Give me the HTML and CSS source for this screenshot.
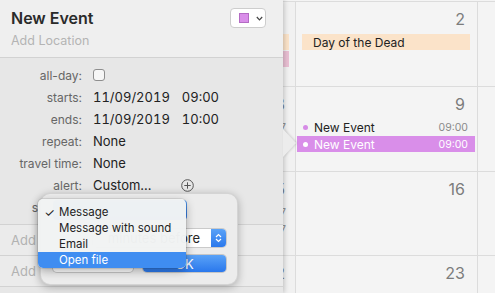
FILE: index.html
```html
<!DOCTYPE html>
<html lang="en">
<head>
  <meta charset="UTF-8" />
  <meta name="viewport" content="width=device-width, initial-scale=1.0"/>
  <title>New Event</title>
  <link rel="stylesheet" href="styles.css">
</head>
<body>

  <div class="screen">

    <!-- event popover -->
    <div class="popover">
      <header class="pop-head">
        <div class="title-row">
          <h1 class="title">New Event</h1>
          <button class="color-btn">
            <span class="swatch"></span>
            <svg width="7" height="5" viewBox="0 0 7 5"><polyline points="0.8,1 3.5,3.8 6.2,1" fill="none" stroke="#444" stroke-width="1.2"/></svg>
          </button>
        </div>
        <div class="location">Add Location</div>
      </header>

      <div class="pop-body">
        <div class="label">all-day:</div>
        <div class="value"><span class="checkbox"></span></div>

        <div class="label">starts:</div>
        <div class="value"><span>11/09/2019</span><span class="time">09:00</span></div>

        <div class="label">ends:</div>
        <div class="value"><span>11/09/2019</span><span class="time">10:00</span></div>

        <div class="label">repeat:</div>
        <div class="value">None</div>

        <div class="label">travel time:</div>
        <div class="value">None</div>

        <div class="label">alert:</div>
        <div class="value">
          <span class="custom">Custom…</span>
          <svg class="plus" width="13" height="13" viewBox="0 0 13 13">
            <circle cx="6.5" cy="6.5" r="5.8" fill="none" stroke="#555" stroke-width="1"/>
            <path d="M6.5 3.3v6.4M3.3 6.5h6.4" stroke="#555" stroke-width="1"/>
          </svg>
        </div>

        <div class="label">show as:</div>
        <div class="value">Busy</div>
      </div>

      <div class="pop-add">Add Invitees</div>
      <div class="pop-add">Add Notes, URL, or Attachments</div>

      <div class="arrow"></div>
    </div>

    <!-- month grid behind -->
    <div class="calendar">
      <div class="cell cut">
        <div class="day"></div>
        <div class="ev tan"></div>
        <div class="ev pink"></div>
      </div>
      <div class="cell">
        <div class="day">2</div>
        <div class="ev tan">Day of the Dead</div>
      </div>
      <div class="cell"></div>

      <div class="cell cut">
        <div class="day">8</div>
        <div class="ev"><span class="when">09:07</span></div>
      </div>
      <div class="cell">
        <div class="day">9</div>
        <div class="ev"><span class="dot"></span>New Event<span class="when">09:00</span></div>
        <div class="ev picked"><span class="dot"></span>New Event<span class="when">09:00</span></div>
      </div>
      <div class="cell"></div>

      <div class="cell cut">
        <div class="day">15</div>
        <div class="ev"><span class="when">10:07</span></div>
        <div class="ev"><span class="when">11:07</span></div>
      </div>
      <div class="cell">
        <div class="day">16</div>
      </div>
      <div class="cell"></div>

      <div class="cell cut">
        <div class="day">22</div>
      </div>
      <div class="cell">
        <div class="day">23</div>
      </div>
      <div class="cell"></div>
    </div>

    <!-- custom alert sheet -->
    <div class="sheet">
      <div class="sheet-popup"></div>
      <div class="sheet-select">
        <span class="select-text">minutes before</span>
        <span class="stepper">
          <svg width="7" height="10" viewBox="0 0 7 10"><polyline points="1,4 3.5,1.5 6,4" fill="none" stroke="#fff" stroke-width="1.2"/><polyline points="1,6 3.5,8.5 6,6" fill="none" stroke="#fff" stroke-width="1.2"/></svg>
        </span>
      </div>
      <div class="sheet-buttons">
        <button class="btn"></button>
        <button class="btn primary">OK</button>
      </div>
    </div>

    <div class="menu">
      <div class="menu-item"><span class="check">✓</span>Message</div>
      <div class="menu-item"><span class="check"></span>Message with sound</div>
      <div class="menu-item"><span class="check"></span>Email</div>
      <div class="menu-item active"><span class="check"></span>Open file</div>
    </div>

  </div>

</body>
</html>
```

FILE: styles.css
```css
* {
  box-sizing: border-box;
}

body {
  margin: 0;
  font-family: Inter, "Liberation Sans", Arial, sans-serif;
  font-size: 13px;
  color: #262626;
  background: #f4f4f4;
  overflow: hidden;
}

.screen {
  position: relative;
  display: flex;
  width: 495px;
  height: 293px;
  overflow: hidden;
}

/* popover */

.popover {
  position: relative;
  z-index: 2;
  width: 283px;
  flex-shrink: 0;
  display: flex;
  flex-direction: column;
  background: #e7e7e7;
  box-shadow: 1px 0 5px rgba(0, 0, 0, 0.22);
}

.pop-head {
  height: 58px;
  padding: 8px 17px 0 11px;
  background: #efefef;
  border-bottom: 1px solid #d2d2d2;
}

.title-row {
  display: flex;
  justify-content: space-between;
  align-items: center;
}

.title {
  margin: 0;
  font-size: 16px;
  line-height: 20px;
  font-weight: 600;
  color: #2a2a2a;
}

.color-btn {
  display: flex;
  align-items: center;
  gap: 7px;
  width: 36px;
  height: 20px;
  padding: 0 0 0 8px;
  background: #fff;
  border: 1px solid #cdcdcd;
  border-radius: 4px;
}

.swatch {
  width: 10px;
  height: 10px;
  background: #d98ee9;
  border: 1px solid #b46cc4;
}

.location {
  margin-top: 5px;
  line-height: 16px;
  font-size: 12.5px;
  color: #b4b4b4;
}

.pop-body {
  display: grid;
  grid-template-columns: 71px auto;
  grid-auto-rows: 22px;
  column-gap: 11px;
  align-items: center;
  padding: 6px 0 6px 11px;
  border-bottom: 1px solid #d2d2d2;
}

.label {
  text-align: right;
  font-size: 12px;
  color: #666;
  white-space: nowrap;
}

.value {
  display: flex;
  align-items: center;
  color: #222;
  font-variant-numeric: tabular-nums;
}

.time {
  margin-left: 12px;
}

.checkbox {
  width: 12px;
  height: 12px;
  background: #f6f6f6;
  border: 1px solid #8e8e8e;
  border-radius: 3px;
}

.custom {
  width: 88px;
}

.pop-add {
  height: 31px;
  line-height: 30px;
  padding-left: 11px;
  color: #b2b2b2;
  background: #ebebeb;
  border-bottom: 1px solid #d2d2d2;
  white-space: nowrap;
}

.pop-add:last-of-type {
  flex: 1;
  border-bottom: none;
  padding-top: 3px;
}

.arrow {
  position: absolute;
  right: -13px;
  top: 129px;
  width: 0;
  height: 0;
  border-top: 14px solid transparent;
  border-bottom: 14px solid transparent;
  border-left: 13px solid #ececec;
  filter: drop-shadow(1px 0 1px rgba(0, 0, 0, 0.15));
}

/* calendar grid */

.calendar {
  flex: 1;
  display: grid;
  grid-template-columns: 12px 181px 1fr;
  grid-template-rows: 84px 84px 83px 1fr;
  gap: 1px;
  margin-top: 1px;
  border-top: 1px solid #dcdcdc;
  background: #dcdcdc;
}

.cell {
  background: #f4f4f4;
  overflow: hidden;
}

.cut {
  background: #f1f1f1;
}

.day {
  display: flex;
  justify-content: flex-end;
  padding: 8px 12px 0 0;
  height: 26px;
  line-height: 18px;
  font-size: 16px;
  color: #7c7c7c;
  white-space: nowrap;
}

.cut .day {
  padding-right: 10px;
}

.ev {
  display: flex;
  align-items: center;
  height: 16px;
  margin: 6px 2px 1px 1px;
  padding: 0 7px 0 6px;
  font-size: 12px;
  white-space: nowrap;
  color: #222;
}

.ev + .ev {
  margin-top: 0;
}

.ev.tan {
  margin-left: 6px;
  margin-right: 7px;
  padding-left: 11px;
  background: #fbe3c9;
}

.ev.pink {
  margin-left: 6px;
  margin-right: 7px;
  background: #e9bfd3;
}

.cut .ev {
  margin-left: 0;
  margin-right: 9px;
  justify-content: flex-end;
  padding: 0;
}

.cut .ev.tan,
.cut .ev.pink {
  margin-right: 6px;
}

.dot {
  width: 5px;
  height: 5px;
  margin-right: 6px;
  border-radius: 50%;
  background: #d68be6;
}

.when {
  margin-left: auto;
  font-size: 10.5px;
  color: #8a8a8a;
}

.ev.picked {
  background: #d98ee9;
  color: #fff;
}

.ev.picked .dot {
  background: #fff;
}

.ev.picked .when {
  color: #fff;
}

/* custom alert sheet */

.sheet {
  position: absolute;
  z-index: 3;
  left: 40px;
  top: 193px;
  width: 198px;
  height: 92px;
  padding: 6px 11px 0 12px;
  background: #ececec;
  border: 1px solid rgba(0, 0, 0, 0.1);
  border-radius: 10px;
  box-shadow: 0 2px 9px rgba(0, 0, 0, 0.28);
}

.sheet-popup {
  width: 134px;
  height: 20px;
  border-radius: 4px;
  background: linear-gradient(#5aa2f7, #2a78ec);
}

.sheet-select {
  display: flex;
  height: 18px;
  margin: 9px 0 0 40px;
  background: #fff;
  border-radius: 4px;
  box-shadow: 0 0 0 1px rgba(0, 0, 0, 0.14);
}

.select-text {
  flex: 1;
  line-height: 18px;
  text-align: right;
  padding-right: 11px;
}

.stepper {
  display: flex;
  align-items: center;
  justify-content: center;
  width: 15px;
  border-radius: 0 4px 4px 0;
  background: linear-gradient(#5aa2f7, #2a78ec);
}

.sheet-buttons {
  display: flex;
  gap: 10px;
  margin-top: 8px;
}

.btn {
  width: 81px;
  height: 17px;
  padding: 0;
  font-family: inherit;
  font-size: 13px;
  background: #fff;
  border: none;
  border-radius: 4px;
  box-shadow: 0 0 0 1px rgba(0, 0, 0, 0.16);
}

.btn.primary {
  width: 84px;
  color: #fff;
  background: linear-gradient(#5aa2f7, #2a78ec);
}

/* popup menu */

.menu {
  position: absolute;
  z-index: 4;
  left: 38px;
  top: 199px;
  width: 148px;
  height: 69px;
  padding-top: 5px;
  overflow: hidden;
  background: rgba(241, 243, 243, 0.98);
  border-radius: 5px;
  box-shadow: 0 3px 10px rgba(0, 0, 0, 0.3), 0 0 0 1px rgba(0, 0, 0, 0.08);
}

.menu-item {
  display: flex;
  align-items: center;
  height: 16px;
  font-size: 11.5px;
  white-space: nowrap;
  color: #222;
}

.check {
  width: 21px;
  padding-left: 2px;
  text-align: center;
  font-size: 12px;
}

.menu-item.active {
  background: #3f8df1;
  color: #fff;
}
```
